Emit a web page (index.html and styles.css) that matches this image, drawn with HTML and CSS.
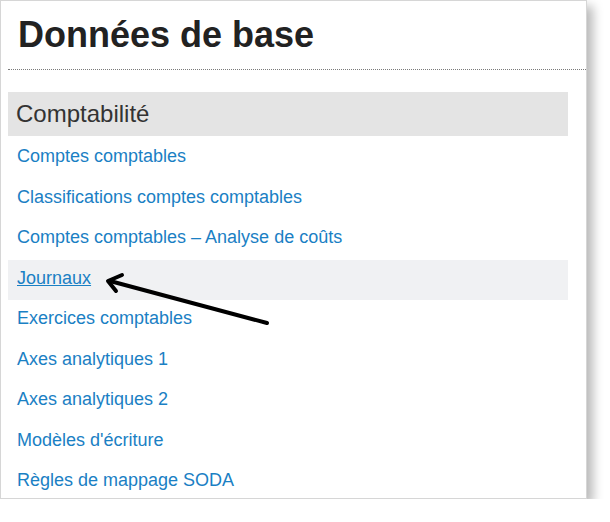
FILE: index.html
```html
<!DOCTYPE html>
<html lang="fr">
<head>
<meta charset="utf-8">
<title>Données de base</title>
<link rel="stylesheet" href="styles.css">
</head>
<body>
<div class="card">
  <h1 class="title">Données de base</h1>
  <section class="group">
    <h2 class="group-head">Comptabilité</h2>
    <ul class="links">
      <li class="row"><a href="#">Comptes comptables</a></li>
      <li class="row"><a href="#">Classifications comptes comptables</a></li>
      <li class="row"><a href="#">Comptes comptables – Analyse de coûts</a></li>
      <li class="row row-hover"><a href="#">Journaux</a></li>
      <li class="row"><a href="#">Exercices comptables</a></li>
      <li class="row"><a href="#">Axes analytiques 1</a></li>
      <li class="row"><a href="#">Axes analytiques 2</a></li>
      <li class="row"><a href="#">Modèles d'écriture</a></li>
      <li class="row"><a href="#">Règles de mappage SODA</a></li>
    </ul>
  </section>
  <svg class="arrow" width="610" height="522" viewBox="0 0 610 522">
    <path d="M267 323 L110 281" fill="none" stroke="#000" stroke-width="4" stroke-linecap="round"/>
    <path d="M122 275 L108 281 L116 291" fill="none" stroke="#000" stroke-width="4" stroke-linecap="round" stroke-linejoin="round"/>
  </svg>
</div>
</body>
</html>
```

FILE: styles.css
```css
html, body {
  margin: 0;
  padding: 0;
  background: #ffffff;
}
body {
  font-family: "Liberation Sans", Arial, sans-serif;
}
.card {
  position: relative;
  box-sizing: border-box;
  width: 587px;
  height: 499px;
  border: 1px solid #d6d6d6;
  background: #ffffff;
  box-shadow: 6px 6px 10px rgba(0, 0, 0, 0.28);
  overflow: hidden;
}
.title {
  margin: 13px 0 0 7px;
  padding: 0 0 14px 10px;
  font-size: 36px;
  font-weight: bold;
  line-height: 41px;
  color: #222222;
  border-bottom: 1px dotted #7a7a7a;
}
.group {
  margin: 22px 18px 0 7px;
}
.group-head {
  margin: 0;
  padding: 0 0 0 8px;
  height: 44px;
  line-height: 44px;
  font-size: 24px;
  font-weight: normal;
  color: #333333;
  background: #e4e4e4;
}
.links {
  list-style: none;
  margin: 0;
  padding: 2px 0 0 0;
}
.row {
  padding: 6px 0 10.5px 9px;
  line-height: 24px;
  font-size: 18px;
}
.row a {
  color: #1a80c4;
  text-decoration: none;
}
.row-hover {
  background: #f0f1f3;
}
.row-hover a {
  text-decoration: underline;
}
.arrow {
  position: absolute;
  left: -1px;
  top: -1px;
  pointer-events: none;
}
```
